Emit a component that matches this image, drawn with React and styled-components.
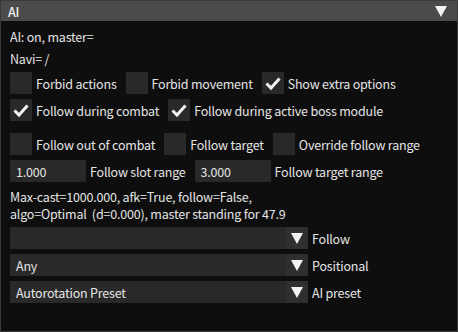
import React from 'react';
import styled, { createGlobalStyle } from 'styled-components';

const GlobalStyle = createGlobalStyle`
  html, body {
    margin: 0;
    padding: 0;
    background: #0e0e0e;
  }
  body {
    font-family: "Noto Sans CJK JP", "Noto Sans", sans-serif;
    font-size: 12.5px;
    letter-spacing: -0.2px;
    color: #e4e4e4;
  }
`;

const Window = styled.div`
  width: 458px;
  height: 332px;
  box-sizing: border-box;
  border: 1px solid #3a3a3a;
  background: #0e0e0e;
  display: flex;
  flex-direction: column;
`;

const TitleBar = styled.div`
  height: 20px;
  background: #4b4b4b;
  display: flex;
  align-items: center;
  justify-content: space-between;
  padding: 0 10px 0 7px;
  color: #f0f0f0;
  font-weight: 500;
`;

const Body = styled.div`
  padding: 7px 9px;
  display: flex;
  flex-direction: column;
  gap: 5px;
`;

const Line = styled.div`
  line-height: 17px;
  white-space: pre;
  margin-top: ${(p) => p.$extra || 0}px;
`;

const Row = styled.div`
  display: flex;
  align-items: center;
  gap: 9px;
  margin-top: ${(p) => p.$extra || 0}px;
`;

const Item = styled.label`
  display: flex;
  align-items: center;
  gap: 4px;
  line-height: 17px;
`;

const Box = styled.span`
  width: 22px;
  height: 22px;
  background: #292929;
  display: flex;
  align-items: center;
  justify-content: center;
`;

const Input = styled.div`
  width: 76px;
  height: 22px;
  background: #292929;
  box-sizing: border-box;
  padding-left: 6px;
  display: flex;
  align-items: center;
`;

const Combo = styled.div`
  width: 298px;
  height: 22px;
  display: flex;
  background: #292929;
`;

const ComboValue = styled.div`
  flex: 1;
  padding-left: 6px;
  display: flex;
  align-items: center;
`;

const ComboButton = styled.div`
  width: 22px;
  background: #2f2f2f;
  display: flex;
  align-items: center;
  justify-content: center;
`;

const Arrow = () => (
  <svg width="12" height="11" viewBox="0 0 12 11">
    <polygon points="0,0 12,0 6,11" fill="#f2f2f2" />
  </svg>
);

const Check = () => (
  <svg width="22" height="22" viewBox="0 0 22 22">
    <polyline
      points="4.5,11.5 9,16 17.5,6.5"
      fill="none"
      stroke="#f2f2f2"
      strokeWidth="3"
    />
  </svg>
);

const Checkbox = ({ label, checked }) => (
  <Item>
    <Box>{checked && <Check />}</Box>
    {label}
  </Item>
);

const Select = ({ value, label }) => (
  <Item>
    <Combo>
      <ComboValue>{value}</ComboValue>
      <ComboButton>
        <Arrow />
      </ComboButton>
    </Combo>
    {label}
  </Item>
);

export default function App() {
  return (
    <>
      <GlobalStyle />
      <Window>
        <TitleBar>
          <span>AI</span>
          <Arrow />
        </TitleBar>
        <Body>
          <Line>AI: on, master=</Line>
          <Line>Navi= /</Line>
          <Row>
            <Checkbox label="Forbid actions" />
            <Checkbox label="Forbid movement" />
            <Checkbox label="Show extra options" checked />
          </Row>
          <Row>
            <Checkbox label="Follow during combat" checked />
            <Checkbox label="Follow during active boss module" checked />
          </Row>
          <Row $extra={7}>
            <Checkbox label="Follow out of combat" />
            <Checkbox label="Follow target" />
            <Checkbox label="Override follow range" />
          </Row>
          <Row>
            <Item>
              <Input>1.000</Input>
              Follow slot range
            </Item>
            <Item>
              <Input>3.000</Input>
              Follow target range
            </Item>
          </Row>
          <Line $extra={1}>
            {'Max-cast=1000.000, afk=True, follow=False,\nalgo=Optimal  (d=0.000), master standing for 47.9'}
          </Line>
          <Select value="" label="Follow" />
          <Select value="Any" label="Positional" />
          <Select value="Autorotation Preset" label="AI preset" />
        </Body>
      </Window>
    </>
  );
}
